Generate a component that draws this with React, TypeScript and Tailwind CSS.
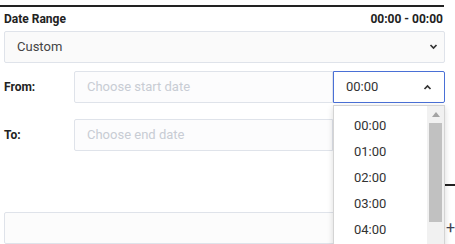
import React from "react";

const Chevron = ({ up }: { up?: boolean }) => (
  <svg width="9" height="6" viewBox="0 0 9 6" className="shrink-0">
    {up ? (
      <path d="M1.5 5 L4.5 2 L7.5 5" fill="none" stroke="#333" strokeWidth="1.7" />
    ) : (
      <path d="M1.5 1 L4.5 4 L7.5 1" fill="none" stroke="#333" strokeWidth="1.7" />
    )}
  </svg>
);

export default function App() {
  const times = ["00:00", "01:00", "02:00", "03:00", "04:00"];
  return (
    <div
      className="relative w-[455px] h-[244px] overflow-hidden bg-white text-[#333]"
      style={{ fontFamily: "Roboto, 'Liberation Sans', sans-serif" }}
    >
      <div className="pt-[5px]">
        <div className="h-[2px] w-[444px] bg-[#222]" />
      </div>
      <div className="flex justify-between items-center w-[445px] pl-[4px] pr-[2px] mt-[4px] h-[16px] text-[12px] font-bold text-[#222]">
        <span>Date Range</span>
        <span>00:00 - 00:00</span>
      </div>
      <div className="ml-[4px] mt-[4px] w-[441px] h-[32px] border border-[#dfe3ea] bg-[#fafafa] rounded-[2px] flex items-center justify-between pl-[12px] pr-[6px]">
        <span className="text-[13px] text-[#444]">Custom</span>
        <Chevron />
      </div>

      <div className="flex items-center mt-[8px] h-[32px]">
        <span className="w-[74px] pl-[4px] text-[12px] font-bold text-[#222]">From:</span>
        <div className="w-[259px] h-[32px] border border-[#dfe3ea] bg-[#fcfcfd] rounded-l-[2px] flex items-center pl-[12px]">
          <span className="text-[13px] text-[#c8ccd4]">Choose start date</span>
        </div>
        <div className="w-[112px] h-[32px] border border-[#4a70d6] bg-white rounded-r-[2px] flex items-center justify-between pl-[12px] pr-[12px]">
          <span className="text-[13px] text-[#333]">00:00</span>
          <Chevron up />
        </div>
      </div>

      <div className="flex items-center mt-[16px] h-[32px]">
        <span className="w-[74px] pl-[4px] text-[12px] font-bold text-[#222]">To:</span>
        <div className="w-[259px] h-[32px] border border-[#dfe3ea] bg-[#fcfcfd] rounded-l-[2px] flex items-center pl-[12px]">
          <span className="text-[13px] text-[#c8ccd4]">Choose end date</span>
        </div>
        <div className="w-[112px] h-[32px] border border-[#dfe3ea] bg-[#fcfcfd]" />
      </div>

      <div className="flex items-center mt-[33px] h-[2px]">
        <div className="ml-[445px] w-[10px] h-[2px] bg-[#222]" />
      </div>

      <div className="flex items-center mt-[26px] h-[32px]">
        <div className="ml-[4px] w-[441px] h-[32px] border border-[#dfe3ea] bg-[#fcfcfc] rounded-[2px]" />
        <span className="ml-[1px] text-[16px] leading-none text-[#445]">+</span>
      </div>

      <div className="absolute left-[333px] top-[105px] w-[112px] h-[160px] border border-[#d4d4d4] bg-white shadow-[0_2px_6px_rgba(0,0,0,0.15)] flex">
        <div className="flex-1 pt-[7px]">
          {times.map((t) => (
            <div key={t} className="h-[26px] flex items-center pl-[20px] text-[13px] text-[#333]">
              {t}
            </div>
          ))}
        </div>
        <div className="w-[17px] bg-[#f1f1f1] flex flex-col items-center">
          <div className="h-[17px] flex items-center justify-center">
            <svg width="8" height="5" viewBox="0 0 8 5">
              <path d="M0 5 L4 0 L8 5 Z" fill="#a3a3a3" />
            </svg>
          </div>
          <div className="w-[13px] h-[99px] bg-[#c1c1c1]" />
        </div>
      </div>
    </div>
  );
}
